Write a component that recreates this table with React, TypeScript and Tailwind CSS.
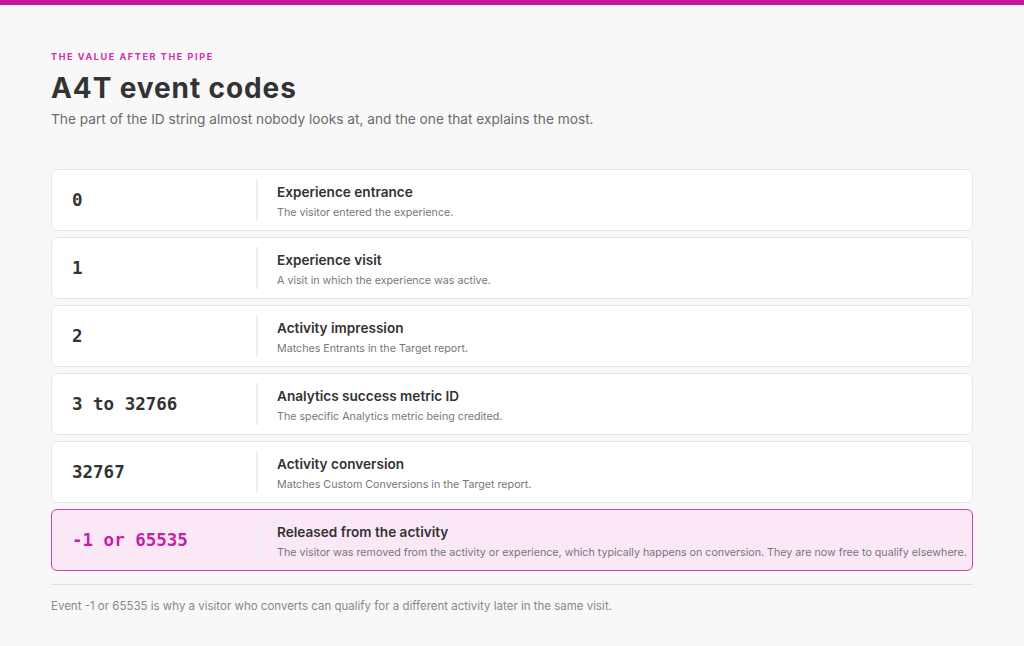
import React from 'react';

type EventCode = {
  code: string;
  title: string;
  desc: string;
  highlight?: boolean;
};

const codes: EventCode[] = [
  { code: '0', title: 'Experience entrance', desc: 'The visitor entered the experience.' },
  { code: '1', title: 'Experience visit', desc: 'A visit in which the experience was active.' },
  { code: '2', title: 'Activity impression', desc: 'Matches Entrants in the Target report.' },
  { code: '3 to 32766', title: 'Analytics success metric ID', desc: 'The specific Analytics metric being credited.' },
  { code: '32767', title: 'Activity conversion', desc: 'Matches Custom Conversions in the Target report.' },
  {
    code: '-1 or 65535',
    title: 'Released from the activity',
    desc: 'The visitor was removed from the activity or experience, which typically happens on conversion. They are now free to qualify elsewhere.',
    highlight: true,
  },
];

function CodeRow({ item }: { item: EventCode }) {
  return (
    <div
      className={`flex items-center h-[62px] rounded-[6px] border ${
        item.highlight ? 'bg-[#fbe8f6] border-[#d63db4]' : 'bg-white border-[#e6e6e6]'
      }`}
    >
      <div
        className={`w-[204px] shrink-0 pl-[20px] font-['DejaVu_Sans_Mono',monospace] font-bold text-[17.5px] ${
          item.highlight ? 'text-[#c81ea3]' : 'text-[#333333]'
        }`}
      >
        {item.code}
      </div>
      <div className="flex-1 min-w-0 border-l-2 border-[#eeeeee] pl-[19px] pt-[3px] pb-[1px]">
        <div className="text-[13.6px] font-semibold text-[#333333] leading-[20px]">{item.title}</div>
        <div className="text-[10.7px] text-[#777777] leading-[14px] mt-[4px] whitespace-nowrap">{item.desc}</div>
      </div>
    </div>
  );
}

export default function App() {
  return (
    <div className="min-h-screen bg-[#f8f8f8] font-['Inter',sans-serif] border-t-[5px] border-[#c8179f]">
      <div className="px-[51px] pt-[46px]">
        {/* Heading */}
        <p className="text-[9px] font-bold tracking-[0.18em] uppercase text-[#d42cb0] leading-[12px]">
          The value after the pipe
        </p>
        <h1 className="mt-[8px] text-[28px] font-bold text-[#333333] leading-[34px] tracking-[0.9px]">
          A4T event codes
        </h1>
        <p className="mt-[5px] text-[13.7px] text-[#6b6b6b] leading-[18px]">
          The part of the ID string almost nobody looks at, and the one that explains the most.
        </p>

        {/* Codes */}
        <div className="mt-[41px] flex flex-col gap-[6px]">
          {codes.map((c) => (
            <CodeRow key={c.code} item={c} />
          ))}
        </div>

        <div className="mt-[13px] border-t border-[#dddddd]" />
        <p className="mt-[13px] text-[11.5px] text-[#888888] leading-[16px]">
          Event -1 or 65535 is why a visitor who converts can qualify for a different activity later in the same visit.
        </p>
      </div>
    </div>
  );
}
